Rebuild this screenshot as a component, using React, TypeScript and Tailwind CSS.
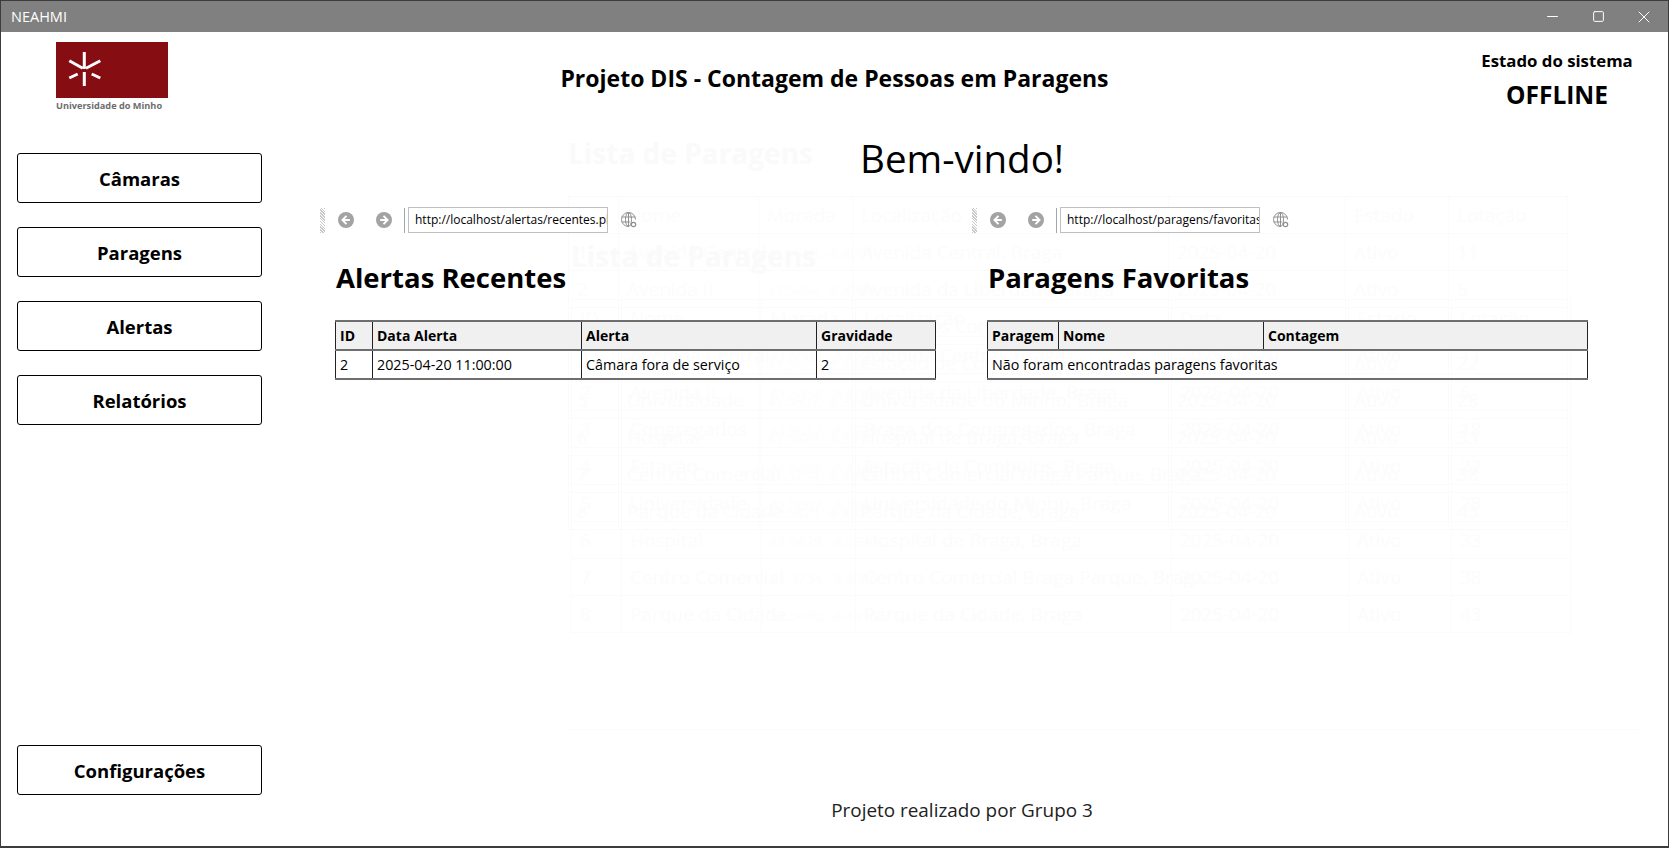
import { Minus, Square, X } from 'lucide-react';

const font = "font-['Open_Sans','Noto_Sans',sans-serif]";

const stops = [
  ['1', 'Avenida Central', '41.5503, -8.4201', 'Avenida Central, Braga', '2025-04-20', 'Ativo', '11'],
  ['2', 'Avenida II', '41.5454, -8.4265', 'Avenida da Liberdade, Braga', '2025-04-20', 'Ativo', '5'],
  ['3', 'Congregados', '41.5517, -8.4229', 'Braga dos Congregados, Braga', '2025-04-20', 'Ativo', '18'],
  ['4', 'Estação', '41.5486, -8.4346', 'Estação de Comboios, Braga', '2025-04-20', 'Ativo', '22'],
  ['5', 'Universidade', '41.5607, -8.3962', 'Universidade do Minho, Braga', '2025-04-20', 'Ativo', '28'],
  ['6', 'Hospital', '41.5679, -8.3990', 'Hospital de Braga, Braga', '2025-04-20', 'Ativo', '33'],
  ['7', 'Centro Comercial', '41.5734, -8.4066', 'Centro Comercial Braga Parque, Braga', '2025-04-20', 'Ativo', '38'],
  ['8', 'Parque da Cidade', '41.5420, -8.4310', 'Parque da Cidade, Braga', '2025-04-20', 'Ativo', '43'],
];

function GhostList({ className }: { className: string }) {
  return (
    <div className={`absolute w-[1000px] text-[#fcfcfc] ${className}`}>
      <h2 className="h-[62px] text-[28px] leading-[38px] font-bold text-[#fafafa]">Lista de Paragens</h2>
      <table className="w-full table-fixed border-collapse text-[19px]">
        <colgroup>
          <col className="w-[50px]" />
          <col className="w-[140px]" />
          <col className="w-[94px]" />
          <col className="w-[316px]" />
          <col className="w-[177px]" />
          <col className="w-[103px]" />
          <col />
        </colgroup>
        <thead>
          <tr className="h-[37px]">
            {['ID', 'Nome', 'Morada', 'Localização', 'Data', 'Estado', 'Lotação'].map((h) => (
              <th key={h} className="border border-[#fbfbfb] px-2 text-left font-normal whitespace-nowrap">
                {h}
              </th>
            ))}
          </tr>
        </thead>
        <tbody>
          {stops.map((row) => (
            <tr key={row[0]} className="h-[37px]">
              {row.map((cell, i) => (
                <td key={i} className="border border-[#fbfbfb] px-2 whitespace-nowrap">
                  {i === 2 ? <span className="text-[14px] text-[#fdfdfd]">{cell}</span> : cell}
                </td>
              ))}
            </tr>
          ))}
        </tbody>
      </table>
    </div>
  );
}

function SideButton({ label }: { label: string }) {
  return (
    <button
      type="button"
      className="h-[50px] w-[245px] rounded-[3px] border border-black bg-white pt-[2px] text-[18.5px] font-bold text-black"
    >
      {label}
    </button>
  );
}

function NavIcon({ flip }: { flip?: boolean }) {
  return (
    <svg viewBox="0 0 16 16" className={`h-4 w-4 ${flip ? 'rotate-180' : ''}`}>
      <circle cx="8" cy="8" r="8" fill="#a3a3a3" />
      <path d="M8.5 3.8 4.4 8l4.1 4.2M4.8 8h7" fill="none" stroke="#fff" strokeWidth="1.9" />
    </svg>
  );
}

function GlobeIcon() {
  return (
    <svg viewBox="0 0 16 16" className="h-4 w-4" fill="none" stroke="#8f8f8f" strokeWidth="1">
      <path d="M14.5 7.5a7 7 0 1 0-7 7" />
      <ellipse cx="7.5" cy="7.5" rx="3" ry="7" />
      <path d="M.8 5h13.4M.8 10h8M7.5.5v14" />
      <circle cx="12.5" cy="12.5" r="2.2" strokeWidth="1.2" />
    </svg>
  );
}

function Toolbar({ url }: { url: string }) {
  return (
    <div className="flex h-[26px] items-center">
      <div className="h-[25px] w-[5px] bg-[repeating-linear-gradient(45deg,#c8c8c8_0_1px,#ffffff_1px_2px)]" />
      <div className="ml-[13px] flex w-[54px] justify-between">
        <NavIcon />
        <NavIcon flip />
      </div>
      <div className="ml-[12px] h-[25px] w-px bg-[#a0a8b0]" />
      <div className="ml-[3px] h-[26px] w-[200px] overflow-hidden border border-[#c0c0c0] bg-white pl-[6px] text-[12px] leading-[24px] whitespace-nowrap text-black">
        {url}
      </div>
      <div className="ml-[13px]">
        <GlobeIcon />
      </div>
    </div>
  );
}

function HeaderCell({ label }: { label: string }) {
  return (
    <th className="border border-y-2 border-[#222] border-y-[#6e6e6e] bg-[#f0f0f0] px-1 text-left text-[14px] font-bold whitespace-nowrap">
      {label}
    </th>
  );
}

function DataCell({ children, colSpan }: { children: string; colSpan?: number }) {
  return (
    <td colSpan={colSpan} className="border border-[#222] border-b-2 border-b-[#6e6e6e] px-1">
      {children}
    </td>
  );
}

export default function App() {
  return (
    <div className={`relative flex h-[848px] w-[1669px] flex-col overflow-hidden border-x border-b-2 border-[#3c3c3c] bg-white text-black ${font}`}>
      <div className="flex h-[32px] shrink-0 items-center justify-between border-t border-[#3c3c3c] bg-[#808080] text-white">
        <span className="pl-[10px] text-[14.5px]">NEAHMI</span>
        <div className="flex items-center">
          <Minus size={17} strokeWidth={1} absoluteStrokeWidth />
          <Square size={13} strokeWidth={1} absoluteStrokeWidth className="ml-[31px]" />
          <X size={20} strokeWidth={1} absoluteStrokeWidth className="mr-[14px] ml-[29px]" />
        </div>
      </div>

      <GhostList className="top-[134px] left-[567px]" />
      <GhostList className="top-[237px] left-[570px]" />
      <div className="absolute top-[729px] left-[567px] h-px w-[1070px] bg-[#fafafa]" />

      <div className="relative flex min-h-0 flex-1">
        <aside className="flex w-[279px] shrink-0 flex-col pl-[16px]">
          <div className="mt-[10px] ml-[39px] w-[112px]">
            <div className="flex h-[56px] items-center bg-[#860e12] pl-[11px]">
              <svg viewBox="0 0 34 38" className="h-[38px] w-[34px]" stroke="#fff" strokeWidth="3">
                <path d="M17.3 1v17M17.3 21v14M2.3 9.7l13.4 7.6M33.3 9.7 19 17.3M2.3 27l8.4-4M33.3 27l-8.6-4" fill="none" />
              </svg>
            </div>
            <div className="mt-[1px] text-[9.2px] leading-[14px] font-bold whitespace-nowrap text-[#6d6d6d]">
              Universidade do Minho
            </div>
          </div>
          <div className="mt-[40px] flex flex-col gap-[24px]">
            <SideButton label="Câmaras" />
            <SideButton label="Paragens" />
            <SideButton label="Alertas" />
            <SideButton label="Relatórios" />
          </div>
          <div className="mt-auto mb-[51px]">
            <SideButton label="Configurações" />
          </div>
        </aside>

        <main className="flex min-w-0 flex-1 flex-col">
          <div className="flex h-[88px] shrink-0">
            <h1 className="mt-[30px] w-[1109px] text-center text-[23px] leading-[32px] font-bold">
              Projeto DIS - Contagem de Pessoas em Paragens
            </h1>
            <div className="ml-[88px] flex w-[160px] flex-col items-center pt-[16px]">
              <span className="text-[16.8px] leading-[26px] font-bold whitespace-nowrap">Estado do sistema</span>
              <span className="mt-[3px] text-[24.5px] leading-[36px] font-bold">OFFLINE</span>
            </div>
          </div>

          <div className="mt-[10px] w-[1364px] text-center text-[38.5px] leading-[56px]">Bem-vindo!</div>

          <div className="mt-[21px] flex pl-[40px]">
            <section className="w-[652px]">
              <Toolbar url="http://localhost/alertas/recentes.php" />
              <h2 className="mt-[26px] pl-[16px] text-[27.5px] leading-[38px] font-bold">Alertas Recentes</h2>
              <table className="mt-[23px] ml-[15px] w-[601px] table-fixed border-collapse text-[14.3px]">
                <colgroup>
                  <col className="w-[37px]" />
                  <col className="w-[209px]" />
                  <col className="w-[235px]" />
                  <col />
                </colgroup>
                <thead>
                  <tr className="h-[29px]">
                    <HeaderCell label="ID" />
                    <HeaderCell label="Data Alerta" />
                    <HeaderCell label="Alerta" />
                    <HeaderCell label="Gravidade" />
                  </tr>
                </thead>
                <tbody>
                  <tr className="h-[29px]">
                    <DataCell>2</DataCell>
                    <DataCell>2025-04-20 11:00:00</DataCell>
                    <DataCell>Câmara fora de serviço</DataCell>
                    <DataCell>2</DataCell>
                  </tr>
                </tbody>
              </table>
            </section>

            <section className="w-[620px]">
              <Toolbar url="http://localhost/paragens/favoritas.php" />
              <h2 className="mt-[26px] pl-[16px] text-[27.5px] leading-[38px] font-bold">Paragens Favoritas</h2>
              <table className="mt-[23px] ml-[15px] w-[601px] table-fixed border-collapse text-[14.3px]">
                <colgroup>
                  <col className="w-[71px]" />
                  <col className="w-[205px]" />
                  <col />
                </colgroup>
                <thead>
                  <tr className="h-[29px]">
                    <HeaderCell label="Paragem" />
                    <HeaderCell label="Nome" />
                    <HeaderCell label="Contagem" />
                  </tr>
                </thead>
                <tbody>
                  <tr className="h-[29px]">
                    <DataCell colSpan={3}>Não foram encontradas paragens favoritas</DataCell>
                  </tr>
                </tbody>
              </table>
            </section>
          </div>

          <div className="mt-auto mb-[22px] w-[1364px] text-center text-[18.9px] leading-[28px] text-[#222]">
            Projeto realizado por Grupo 3
          </div>
        </main>
      </div>
    </div>
  );
}
